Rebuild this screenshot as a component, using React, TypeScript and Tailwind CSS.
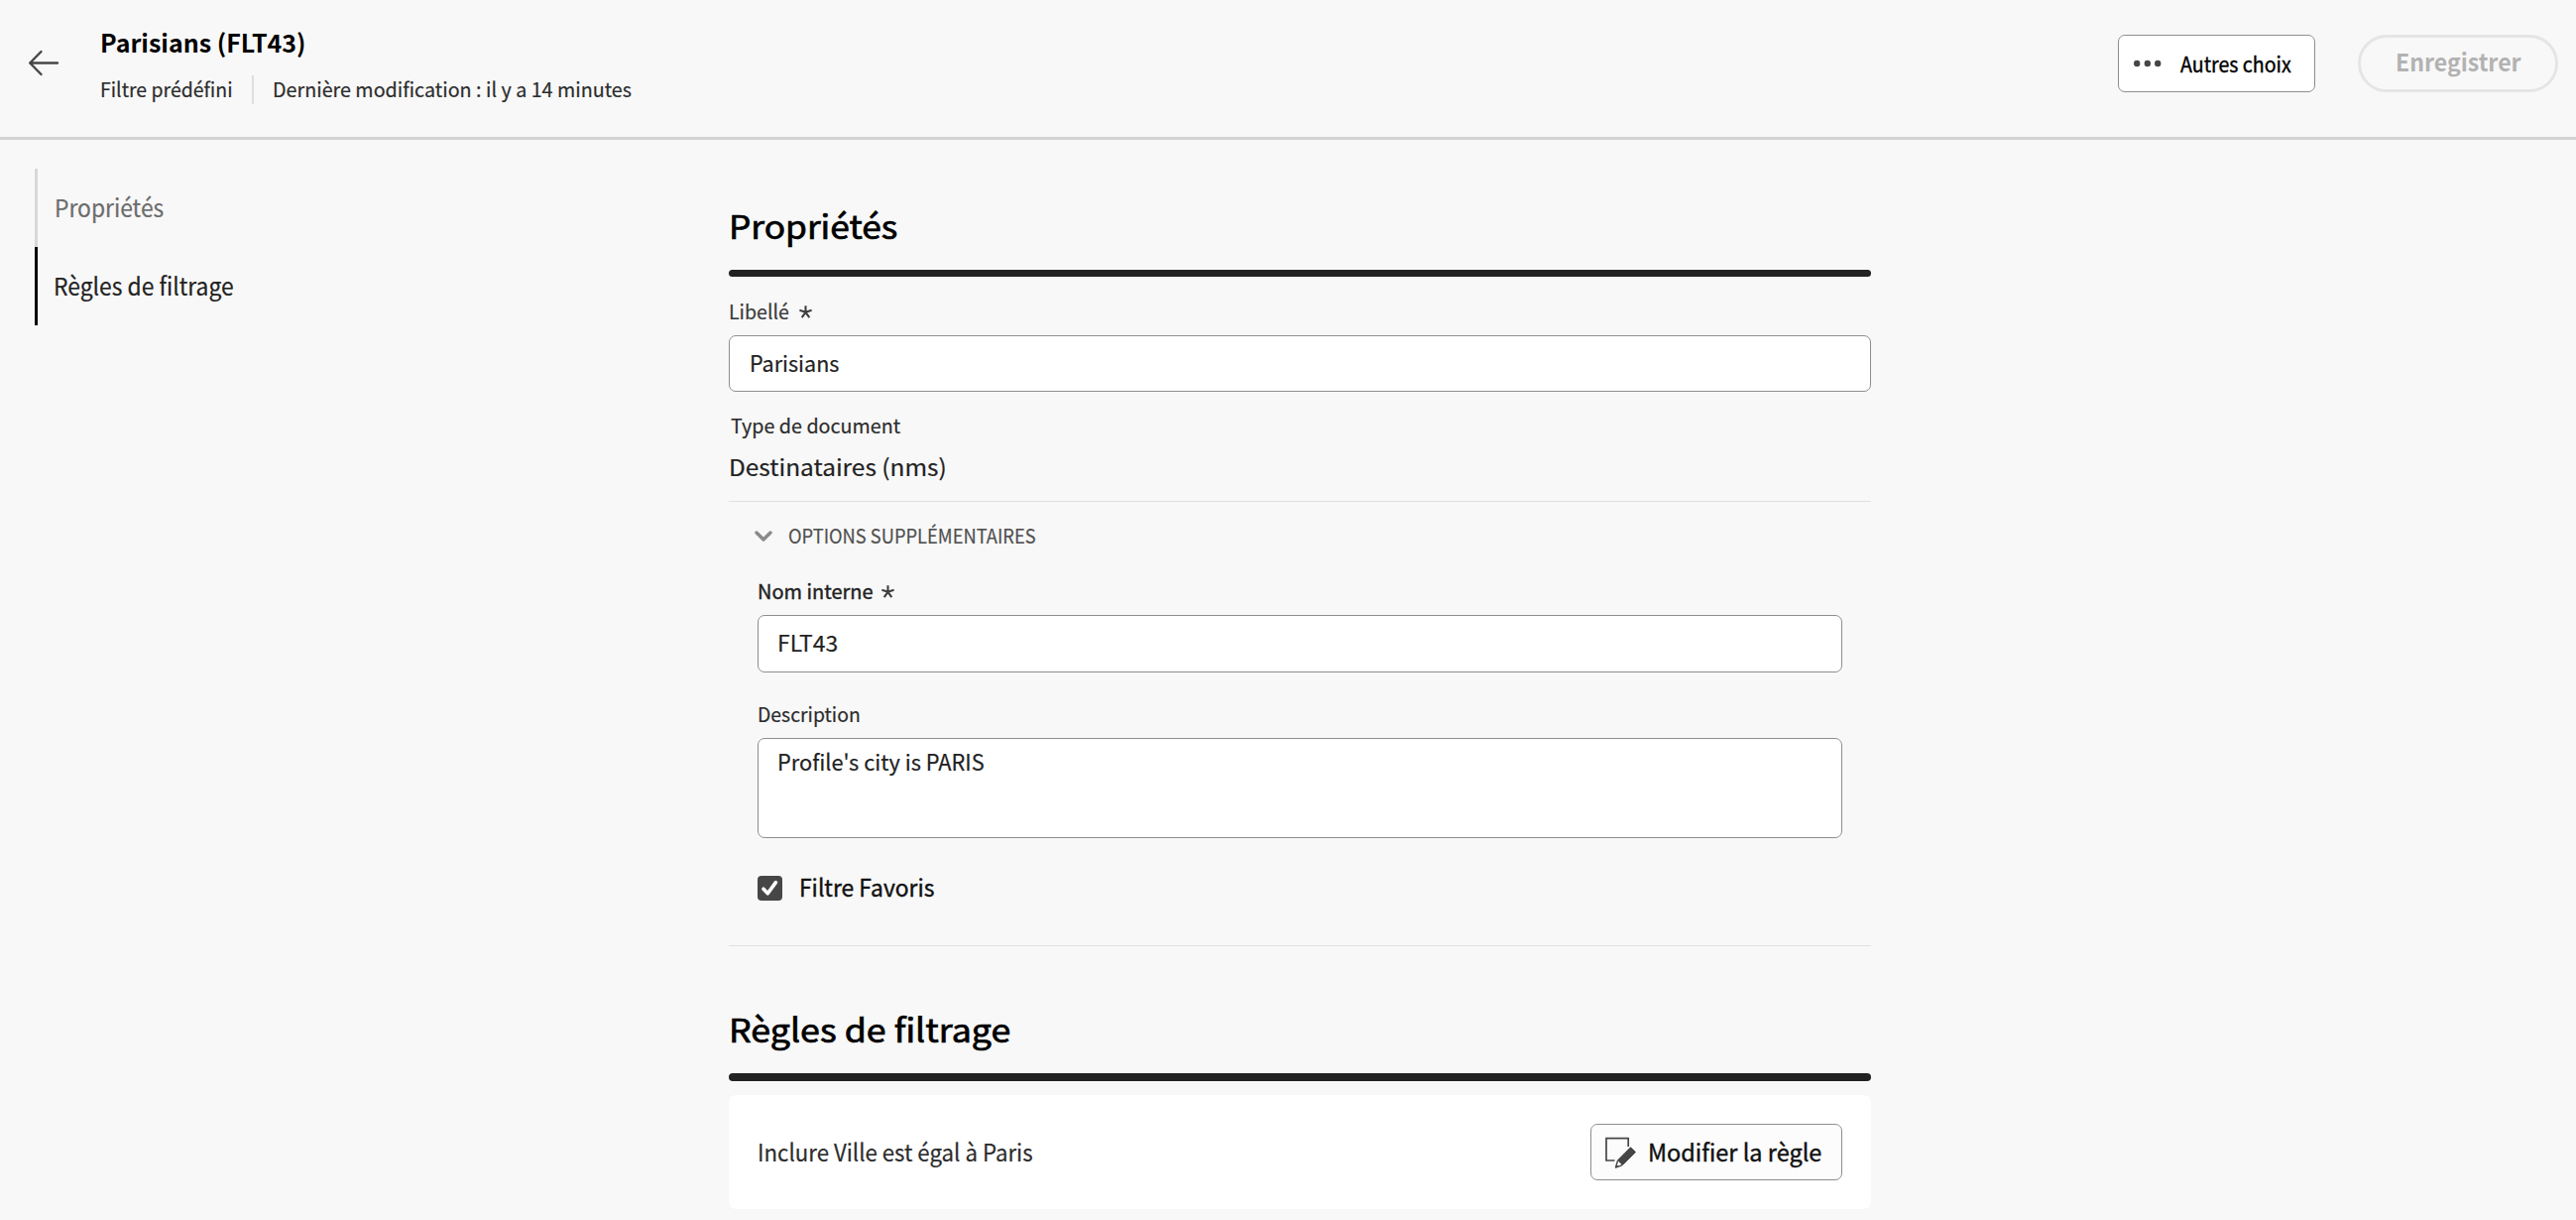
import { useLayoutEffect, useRef, useState } from "react";

type LabelProps = {
  text: string;
  width: number;
  className?: string;
  as?: "span" | "h1" | "h2" | "label";
};

/** Single line of text, condensed horizontally so that it fills the given width. */
function Label({ text, width, className = "", as: Tag = "span" }: LabelProps) {
  const inner = useRef<HTMLSpanElement>(null);
  const [scale, setScale] = useState(1);
  useLayoutEffect(() => {
    if (inner.current) setScale(width / inner.current.offsetWidth);
  }, [width, text]);
  return (
    <Tag className={`block h-8 shrink-0 leading-8 ${className}`} style={{ width }}>
      <span
        ref={inner}
        className="inline-block origin-left -translate-y-px whitespace-nowrap"
        style={{ transform: `scaleX(${scale})` }}
      >
        {text}
      </span>
    </Tag>
  );
}

function Asterisk() {
  return (
    <svg className="mt-px h-[13px] w-[13px]" viewBox="0 0 13 13" fill="none" stroke="#3f3f3f" strokeWidth="2.1">
      <path d="M6.5 6.8V0.3M6.5 6.8L12.6 4.8M6.5 6.8L10.3 12.2M6.5 6.8L2.7 12.2M6.5 6.8L0.4 4.8" />
    </svg>
  );
}

function Header() {
  return (
    <header className="flex h-[141px] items-start justify-between border-b-[3px] border-[#d3d3d3] pr-[18px]">
      <div className="flex">
        <button className="mt-[50px] ml-[28px] h-[28px] w-[32px]" aria-label="Retour">
          <svg viewBox="0 0 32 28" fill="none" stroke="#464646" strokeWidth="2.4" strokeLinecap="round" strokeLinejoin="round">
            <path d="M30 13.5H2.2M13.5 2L2.2 13.5L13.5 25" />
          </svg>
        </button>
        <div className="ml-[41px] pt-[27px]">
          <Label as="h1" text="Parisians (FLT43)" width={207} className="text-[25px] font-bold text-black" />
          <div className="mt-[15px] flex text-[20.5px] text-[#2c2c2c] [-webkit-text-stroke:0.2px_currentColor]">
            <Label text="Filtre prédéfini" width={134} />
            <div className="mt-[2px] ml-[19px] h-[29px] w-[2px] bg-[#dedede]" />
            <Label text="Dernière modification : il y a 14 minutes" width={362} className="ml-[19px]" />
          </div>
        </div>
      </div>
      <div className="flex gap-[43px] pt-[35px]">
        <button className="flex h-[58px] w-[199px] items-center rounded-[7px] border border-[#8e8e8e] bg-white pl-[15px]">
          <svg className="h-2 w-7" viewBox="0 0 28 8" fill="#464646">
            <circle cx="3.2" cy="4" r="3.2" />
            <circle cx="13.8" cy="4" r="3.2" />
            <circle cx="24.2" cy="4" r="3.2" />
          </svg>
          <Label text="Autres choix" width={112} className="mt-[2px] ml-[19px] text-left text-[21.5px] text-black [-webkit-text-stroke:0.4px_#000]" />
        </button>
        <button className="flex h-[58px] w-[202px] items-center justify-center rounded-full border-[3px] border-[#e5e5e5] pb-[2px]">
          <Label text="Enregistrer" width={127} className="text-left text-[24px] font-bold text-[#b2b2b2]" />
        </button>
      </div>
    </header>
  );
}

function SideNav() {
  return (
    <nav className="w-[700px] pt-[29px] pl-[35px] text-[24.5px] [-webkit-text-stroke:0.2px_currentColor]">
      <div className="flex h-[79px] items-center border-l-[3px] border-[#d8d8d8] pl-[17px]">
        <Label text="Propriétés" width={110} className="text-[#6c6c6c]" />
      </div>
      <div className="flex h-[79px] items-center border-l-[3px] border-black pl-[16px]">
        <Label text="Règles de filtrage" width={182} className="text-[#222]" />
      </div>
    </nav>
  );
}

function Properties() {
  return (
    <section>
      <Label as="h2" text="Propriétés" width={170} className="h-12 text-[33px] leading-[48px] text-black [-webkit-text-stroke:0.7px_#000]" />
      <div className="mt-5 h-[7px] rounded-full bg-[#222]" />
      <div className="mt-[19px] flex items-center">
        <Label as="label" text="Libellé" width={61} className="text-[20.5px] text-[#3a3a3a]" />
        <div className="ml-[10px]">
          <Asterisk />
        </div>
      </div>
      <div className="mt-2 flex h-[57px] items-center rounded-[7px] border border-[#8e8e8e] bg-white pb-[2px] pl-5">
        <Label text="Parisians" width={90} className="text-[22.5px] text-[#222]" />
      </div>
      <Label text="Type de document" width={171} className="mt-[18px] ml-[2px] text-[20.5px] text-[#2c2c2c]" />
      <Label text="Destinataires (nms)" width={220} className="mt-[10px] text-[23px] text-[#222]" />
      <div className="mt-[18px] border-y border-[#e0e0e0] px-[29px] pt-[18px] pb-[41px]">
        <div className="flex items-center">
          <svg className="mt-[2px] -ml-[3px] h-3 w-[18px]" viewBox="0 0 18 12" fill="none" stroke="#8a8a8a" strokeWidth="3.4" strokeLinecap="round" strokeLinejoin="round">
            <path d="M2 2L9 9L16 2" />
          </svg>
          <Label text="OPTIONS SUPPLÉMENTAIRES" width={250} className="ml-[16px] text-[20.5px] text-[#505050]" />
        </div>
        <div className="mt-6 flex items-center">
          <Label as="label" text="Nom interne" width={117} className="text-[20.5px] text-[#222] [-webkit-text-stroke:0.4px_#222]" />
          <div className="ml-[8px]">
            <Asterisk />
          </div>
        </div>
        <div className="mt-2 flex h-[58px] items-center rounded-[7px] border border-[#8e8e8e] bg-white pb-[2px] pl-[19px]">
          <Label text="FLT43" width={61} className="text-[22.5px] text-[#222]" />
        </div>
        <Label as="label" text="Description" width={104} className="mt-[26px] text-[20.5px] text-[#2c2c2c]" />
        <div className="mt-2 h-[101px] rounded-[7px] border border-[#8e8e8e] bg-white pt-[7px] pl-[19px]">
          <Label text="Profile's city is PARIS" width={209} className="text-[22.5px] text-[#222]" />
        </div>
        <div className="mt-[34px] flex h-[33px] items-center">
          <div className="flex h-[25px] w-[25px] items-center justify-center rounded-[4px] bg-[#464646]">
            <svg className="h-[17px] w-[17px]" viewBox="0 0 17 17" fill="none" stroke="#fff" strokeWidth="3.6" strokeLinecap="round" strokeLinejoin="round">
              <path d="M2 9.2L6.3 13.8L14.4 2.6" />
            </svg>
          </div>
          <Label as="label" text="Filtre Favoris" width={136} className="mb-[2px] ml-[17px] text-[24px] text-[#111] [-webkit-text-stroke:0.4px_#111]" />
        </div>
      </div>
    </section>
  );
}

function FilterRules() {
  return (
    <section className="mt-[60px]">
      <Label as="h2" text="Règles de filtrage" width={284} className="h-12 text-[33px] leading-[48px] text-black [-webkit-text-stroke:0.7px_#000]" />
      <div className="mt-5 h-2 rounded-full bg-[#222]" />
      <div className="mt-[14px] flex h-[115px] items-center justify-between rounded-[8px] bg-white px-[29px]">
        <Label text="Inclure Ville est égal à Paris" width={278} className="text-[24px] text-[#2c2c2c]" />
        <button className="flex h-[57px] w-[254px] items-center rounded-[7px] border border-[#8e8e8e] bg-[#fcfcfc] pl-[13px]">
          <svg className="h-8 w-8" viewBox="0 0 32 32" fill="none">
            <path d="M10.5 24H2V1.7H24.2V10" stroke="#464646" strokeWidth="1.7" />
            <path d="M26.5 10.8L31.5 15.6L18.5 28.5L13.5 23.8Z" fill="#464646" stroke="#464646" strokeWidth="1" strokeLinejoin="round" />
            <path d="M13.5 24.2L11.5 31L18.2 28.7" stroke="#464646" strokeWidth="1.4" strokeLinejoin="round" />
            <path d="M11.3 31.2L12.2 28L14.5 30.2Z" fill="#464646" />
          </svg>
          <Label text="Modifier la règle" width={175} className="ml-[12px] text-left text-[24px] text-[#111] [-webkit-text-stroke:0.4px_#111]" />
        </button>
      </div>
    </section>
  );
}

export default function App() {
  return (
    <div className="h-[1230px] w-[2598px] overflow-hidden bg-[#f8f8f8] font-['Noto_Sans_CJK_SC','Noto_Sans',sans-serif]">
      <Header />
      <div className="flex">
        <SideNav />
        <main className="ml-[35px] w-[1152px] pt-[63px] [-webkit-text-stroke:0.2px_currentColor]">
          <Properties />
          <FilterRules />
        </main>
      </div>
    </div>
  );
}
